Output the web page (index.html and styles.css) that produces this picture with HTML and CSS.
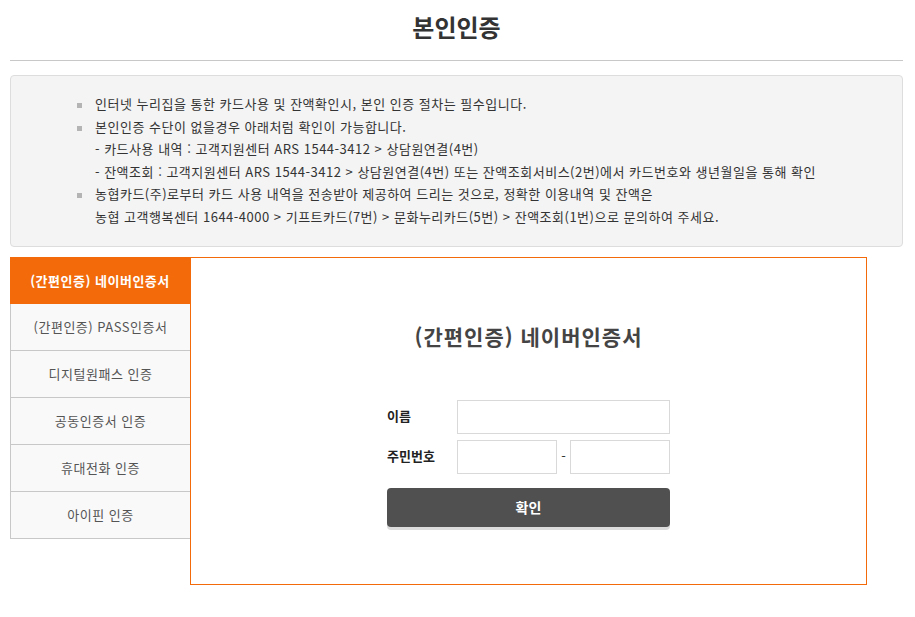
FILE: index.html
```html
<!doctype html>
<html lang="ko">
  <head>
    <meta charset="utf-8">
    <meta name="viewport" content="width=device-width, initial-scale=1.0">
    <title>본인인증</title>
    <link rel="stylesheet" href="styles.css">
  </head>
  <body>
    <div class="wrap">
      <h1 class="page-title">본인인증</h1>
      <hr>
      <div class="notice">
        <ul>
          <li>인터넷 누리집을 통한 카드사용 및 잔액확인시, 본인 인증 절차는 필수입니다.</li>
          <li>본인인증 수단이 없을경우 아래처럼 확인이 가능합니다.<br>
            - 카드사용 내역 : 고객지원센터 ARS 1544-3412 &gt; 상담원연결(4번)<br>
            - 잔액조회 : 고객지원센터 ARS 1544-3412 &gt; 상담원연결(4번) 또는 잔액조회서비스(2번)에서 카드번호와 생년월일을 통해 확인</li>
          <li>농협카드(주)로부터 카드 사용 내역을 전송받아 제공하여 드리는 것으로, 정확한 이용내역 및 잔액은<br>
            농협 고객행복센터 1644-4000 &gt; 기프트카드(7번) &gt; 문화누리카드(5번) &gt; 잔액조회(1번)으로 문의하여 주세요.</li>
        </ul>
      </div>
      <div class="auth">
        <ul class="tabs">
          <li class="on"><a href="#">(간편인증) 네이버인증서</a></li>
          <li><a href="#">(간편인증) PASS인증서</a></li>
          <li><a href="#">디지털원패스 인증</a></li>
          <li><a href="#">공동인증서 인증</a></li>
          <li><a href="#">휴대전화 인증</a></li>
          <li><a href="#">아이핀 인증</a></li>
        </ul>
        <div class="panel">
          <h2>(간편인증) 네이버인증서</h2>
          <form class="auth-form">
            <div class="row">
              <label for="name">이름</label>
              <input type="text" id="name" class="full">
            </div>
            <div class="row">
              <label for="jumin1">주민번호</label>
              <input type="text" id="jumin1" class="half">
              <span class="dash">-</span>
              <input type="password" id="jumin2" class="half">
            </div>
            <button type="button">확인</button>
          </form>
        </div>
      </div>
    </div>
  </body>
</html>
```

FILE: styles.css
```css
body {
  margin: 0;
  font: 13px/1.4 "Noto Sans CJK KR", "Noto Sans", sans-serif;
  color: #333;
  background: #fff;
}
.wrap {
  padding: 0 12px 0 10px;
}
.page-title {
  margin: 0;
  padding-top: 9px;
  height: 36px;
  font-size: 24px;
  line-height: 36px;
  text-align: center;
  color: #333;
}
hr {
  background: #c8c8c8;
  border: none;
  height: 1px;
  margin: 15px 0 14px;
}
.notice {
  background: #f4f4f4;
  border: 1px solid #ddd;
  border-radius: 4px;
  padding: 17px 0 17px 84px;
  color: #333;
}
.notice ul {
  margin: 0;
  padding: 0;
  list-style: none;
}
.notice li {
  position: relative;
  line-height: 22.6px;
  letter-spacing: 0.5px;
}
.notice li::before {
  content: "";
  position: absolute;
  left: -18px;
  top: 10px;
  width: 5px;
  height: 5px;
  background: #b4b4b4;
}
.auth {
  display: flex;
  margin-top: 10px;
  width: 857px;
}
.tabs {
  margin: 0;
  padding: 0;
  list-style: none;
  width: 180px;
  flex-shrink: 0;
}
.tabs li {
  border: 1px solid #c8c8c8;
  border-top: none;
  border-right: none;
  background: #f9f9f9;
}
.tabs li a {
  display: block;
  height: 46px;
  line-height: 46px;
  text-align: center;
  color: #555;
  text-decoration: none;
  font-size: 13px;
  letter-spacing: 0.5px;
}
.tabs li.on {
  background: #f26a0a;
  border: none;
}
.tabs li.on a {
  height: 47px;
  line-height: 47px;
  color: #fff;
  font-weight: bold;
}
.panel {
  flex: 1;
  height: 326px;
  border: 1px solid #f26a0a;
}
.panel h2 {
  margin: 60px 0 0;
  font-size: 21px;
  line-height: 36px;
  font-weight: bold;
  letter-spacing: 1px;
  text-align: center;
  color: #444;
}
.auth-form {
  width: 283px;
  margin: 46px auto 0;
}
.row {
  display: flex;
  align-items: center;
  margin-bottom: 6px;
}
.row label {
  width: 70px;
  font-weight: bold;
  color: #222;
  font-size: 13px;
}
.row input {
  height: 34px;
  box-sizing: border-box;
  border: 1px solid #d9d9d9;
  margin: 0;
  padding: 0 6px;
  font-family: inherit;
  outline: none;
}
.row input.full {
  width: 213px;
}
.row input.half {
  width: 100px;
}
.dash {
  width: 13px;
  text-align: center;
  color: #333;
}
.auth-form button {
  appearance: none;
  display: block;
  width: 283px;
  height: 39px;
  margin-top: 14px;
  border: none;
  border-radius: 4px;
  background: #505050;
  box-shadow: 0 3px 0 #dcdcdc;
  color: #fff;
  font-family: inherit;
  font-size: 14px;
  font-weight: bold;
  cursor: pointer;
}
```
